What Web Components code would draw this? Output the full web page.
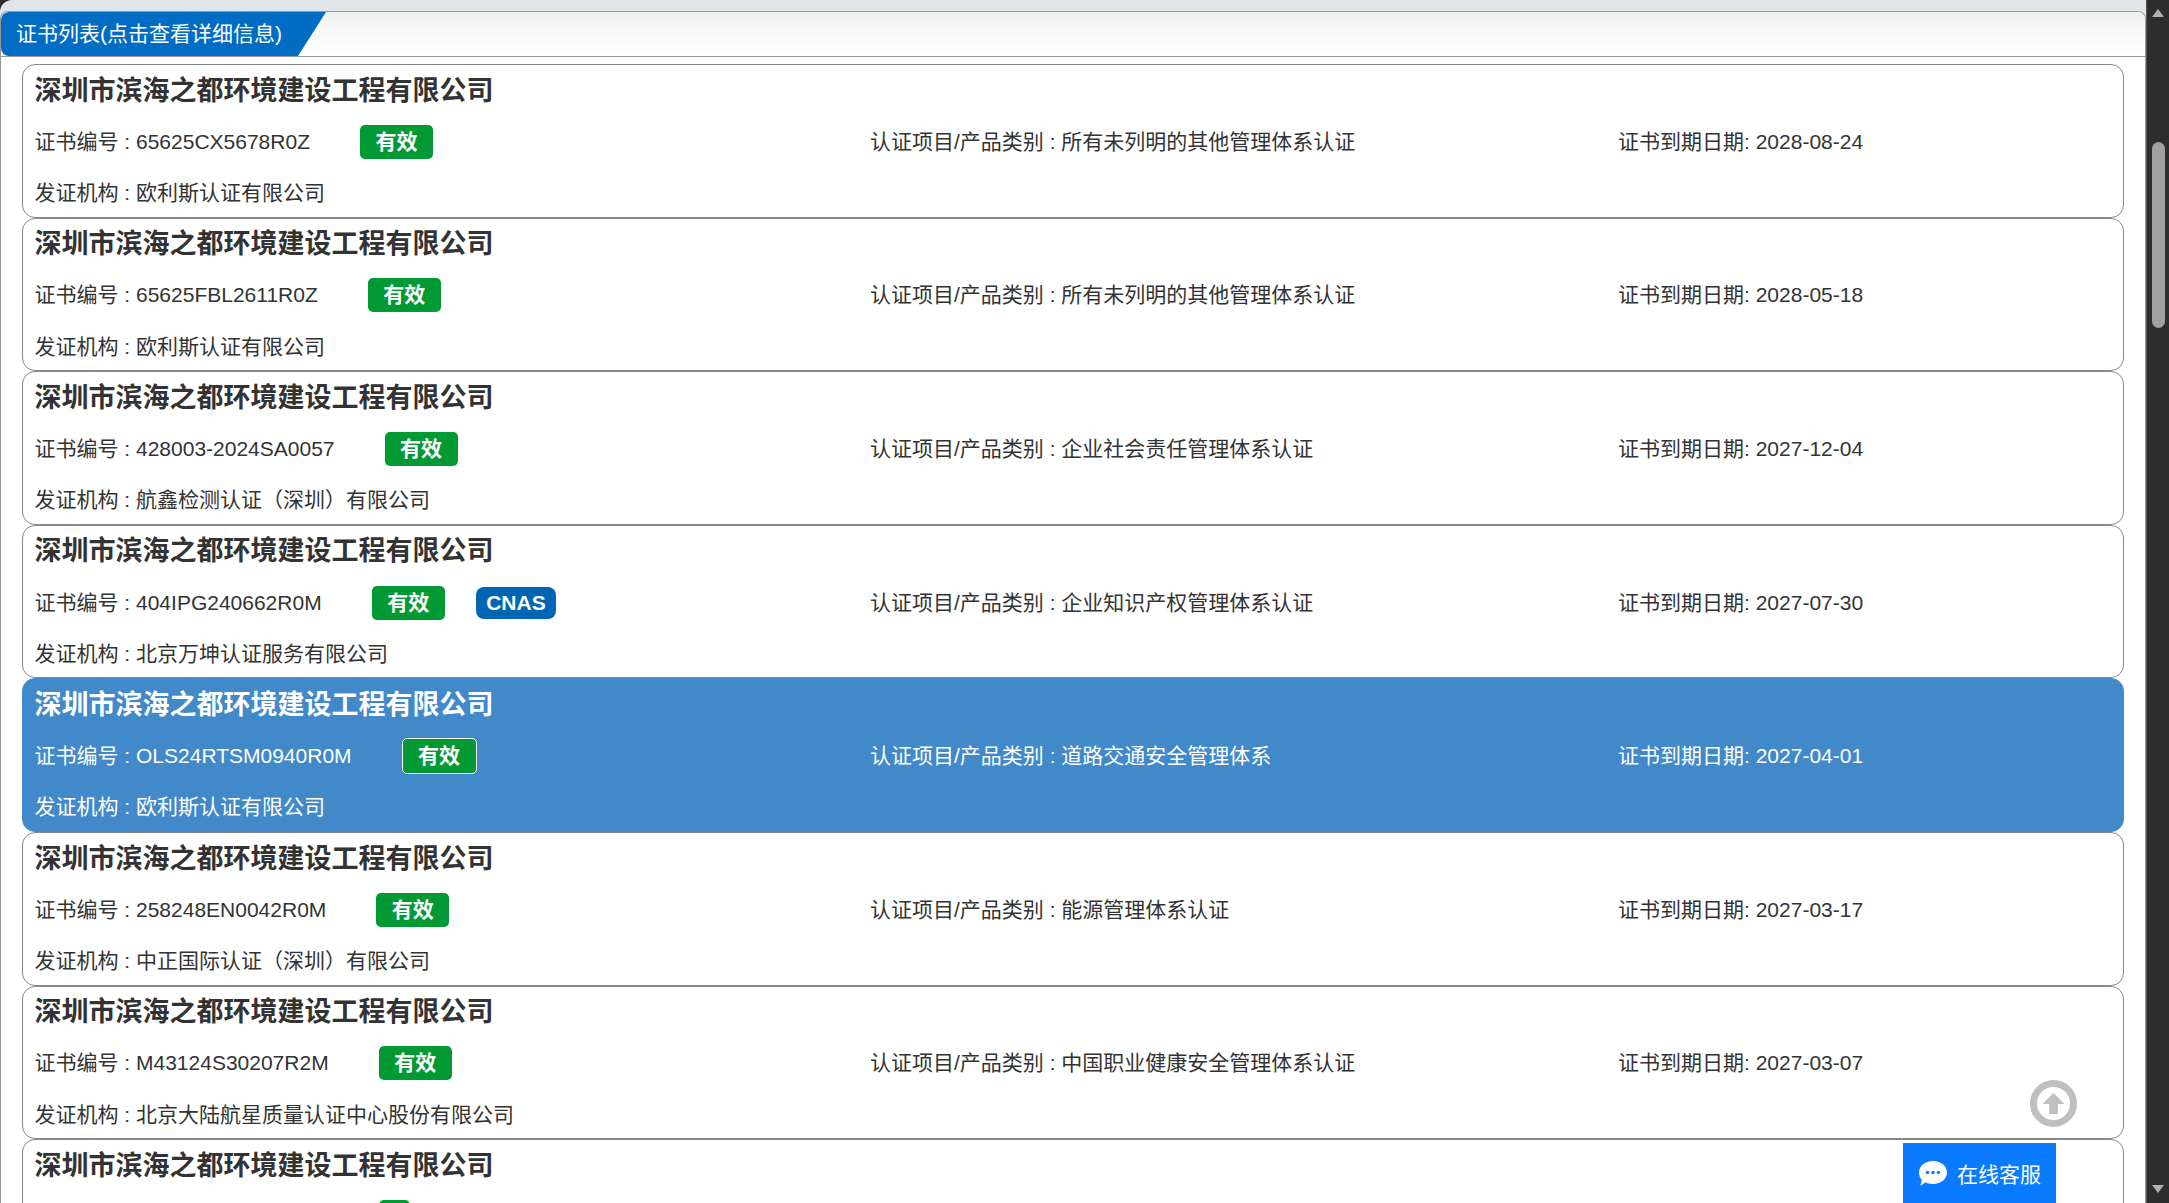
<!DOCTYPE html>
<html lang="zh-CN">
<head>
<meta charset="utf-8">
<title>证书列表</title>
<style>
  html, body { margin: 0; height: 100%; overflow: hidden; background: #2d2d2d; }
  body { font-family: "Liberation Sans", "Noto Sans CJK SC", sans-serif; }
</style>
</head>
<body>
<template id="cert-page-tpl">
  <style>
    :host { display: flex; height: 1203px; position: relative; overflow: hidden; }
    .main { flex: 1; min-width: 0; background: #e2e5e9; border-radius: 12px 0 0 12px; padding-top: 11px; display: flex; }
    .scroll { flex: none; width: 23px; }
  </style>
  <div class="main"><slot></slot></div>
  <div class="scroll"><slot name="scrollbar"></slot></div>
  <slot name="overlay"></slot>
</template>

<template id="cert-panel-tpl">
  <style>
    :host { display: flex; flex-direction: column; flex: 1; min-width: 0; background: #fff; border: 1px solid #999; border-bottom: 0; border-radius: 8px 8px 0 0; overflow: hidden; }
    .head { flex: none; height: 44px; background: linear-gradient(#f1f1f1, #fff); border-bottom: 1px solid #999; }
    .tab { box-sizing: border-box; width: 325px; height: 44px; padding-left: 15px; line-height: 44px; color: #fff; font-size: 21px; background: #006cc4; border-radius: 8px 0 0 8px; clip-path: polygon(0 0, 100% 0, 297px 100%, 0 100%); white-space: nowrap; }
    .list { padding: 7px 21px 0 21px; }
  </style>
  <div class="head"><div class="tab"><slot name="heading"></slot></div></div>
  <div class="list"><slot></slot></div>
</template>

<template id="cert-card-tpl">
  <style>
    :host { display: block; box-sizing: border-box; height: 153.6px; border: 1px solid #888; border-radius: 13px; padding: 0 12px 0 11.5px; color: #333; background: #fff; font-size: 21px; }
    :host([selected]) { background: #4189c9; border-color: #4189c9; color: #fff; }
    .row { display: flex; align-items: center; box-sizing: border-box; height: 51.2px; padding-bottom: 4px; white-space: nowrap; }
    .title { font-size: 27px; font-weight: bold; padding-bottom: 5px; }
    .grid { display: grid; grid-template-columns: 835.5px 748px 1fr; }
    .code { display: flex; align-items: center; }
    .badges { display: flex; align-items: center; gap: 31px; margin-left: 50px; margin-top: 4px; }
    :host([no-code]) .badges { margin-left: 344px; }
  </style>
  <div class="row title"><slot></slot></div>
  <div class="grid">
    <div class="row code"><slot name="code"></slot><span class="badges"><slot name="badge"></slot></span></div>
    <div class="row"><slot name="scope"></slot></div>
    <div class="row"><slot name="expiry"></slot></div>
  </div>
  <div class="row"><slot name="issuer"></slot></div>
</template>

<template id="cert-badge-tpl">
  <style>
    :host { display: inline-block; box-sizing: border-box; height: 34px; line-height: 34px; padding: 0 15.5px; color: #fff; background: #009933; border-radius: 5px; font-size: 21px; font-weight: bold; }
    :host([kind="cnas"]) { height: 32px; line-height: 32px; padding: 0 10.5px; background: #0066b3; border-radius: 8px; }
    :host([outlined]) { height: 36px; line-height: 34px; border: 1px solid #fff; }
  </style>
  <slot></slot>
</template>

<template id="fake-scrollbar-tpl">
  <style>
    :host { display: flex; flex-direction: column; align-items: center; height: 1203px; background: #2d2d2d; border-left: 1px solid #555; box-sizing: border-box; }
    .up { margin-top: 9px; width: 0; height: 0; border: 6px solid transparent; border-top: 0; border-bottom: 8px solid #b0b0b0; }
    .thumb { margin-top: 125px; width: 13px; height: 186px; background: #a0a0a0; border-radius: 7px; }
    .down { margin-top: auto; margin-bottom: 10px; width: 0; height: 0; border: 6px solid transparent; border-bottom: 0; border-top: 8px solid #b0b0b0; }
  </style>
  <div class="up"></div>
  <div class="thumb"></div>
  <div class="down"></div>
</template>

<template id="back-top-tpl">
  <style>
    :host { display: block; position: absolute; left: 2030px; top: 1080px; width: 47px; height: 47px; }
    svg { display: block; }
  </style>
  <svg viewBox="0 0 47 47" width="47" height="47">
    <circle cx="23.5" cy="23.5" r="20" fill="none" stroke="#bfbfbf" stroke-width="7"/>
    <path d="M23.5 13 L34.5 24 H27.8 V34 H19.2 V24 H12.5 Z" fill="#bfbfbf"/>
  </svg>
</template>

<template id="chat-button-tpl">
  <style>
    :host { display: flex; align-items: center; position: absolute; left: 1903px; top: 1143px; box-sizing: border-box; width: 153px; height: 60px; padding-left: 16px; gap: 10px; background: #0a7bff; color: #fff; font-size: 21px; }
    svg { flex: none; display: block; }
  </style>
  <svg viewBox="0 0 28 25" width="28" height="25">
    <path d="M14 0 C22 0 28 5 28 11.5 C28 18 22 23 14 23 C11 23 8 22.3 6 21.3 C4.5 23 3 24 1 24.5 C2.3 22.5 2.8 20.5 2.6 18.7 C1 16.8 0 14.3 0 11.5 C0 5 6 0 14 0 Z" fill="#fff"/>
    <circle cx="8.5" cy="11.5" r="1.7" fill="#0a7bff"/>
    <circle cx="14" cy="11.5" r="1.7" fill="#0a7bff"/>
    <circle cx="19.5" cy="11.5" r="1.7" fill="#0a7bff"/>
  </svg>
  <slot></slot>
</template>

<cert-page>
  <cert-panel>
    <span slot="heading">证书列表(点击查看详细信息)</span>
    <cert-card>深圳市滨海之都环境建设工程有限公司
      <span slot="code">证书编号 : 65625CX5678R0Z</span><cert-badge slot="badge">有效</cert-badge>
      <span slot="scope">认证项目/产品类别 : 所有未列明的其他管理体系认证</span>
      <span slot="expiry">证书到期日期: 2028-08-24</span>
      <span slot="issuer">发证机构 : 欧利斯认证有限公司</span>
    </cert-card>
    <cert-card>深圳市滨海之都环境建设工程有限公司
      <span slot="code">证书编号 : 65625FBL2611R0Z</span><cert-badge slot="badge">有效</cert-badge>
      <span slot="scope">认证项目/产品类别 : 所有未列明的其他管理体系认证</span>
      <span slot="expiry">证书到期日期: 2028-05-18</span>
      <span slot="issuer">发证机构 : 欧利斯认证有限公司</span>
    </cert-card>
    <cert-card>深圳市滨海之都环境建设工程有限公司
      <span slot="code">证书编号 : 428003-2024SA0057</span><cert-badge slot="badge">有效</cert-badge>
      <span slot="scope">认证项目/产品类别 : 企业社会责任管理体系认证</span>
      <span slot="expiry">证书到期日期: 2027-12-04</span>
      <span slot="issuer">发证机构 : 航鑫检测认证（深圳）有限公司</span>
    </cert-card>
    <cert-card>深圳市滨海之都环境建设工程有限公司
      <span slot="code">证书编号 : 404IPG240662R0M</span><cert-badge slot="badge">有效</cert-badge><cert-badge slot="badge" kind="cnas">CNAS</cert-badge>
      <span slot="scope">认证项目/产品类别 : 企业知识产权管理体系认证</span>
      <span slot="expiry">证书到期日期: 2027-07-30</span>
      <span slot="issuer">发证机构 : 北京万坤认证服务有限公司</span>
    </cert-card>
    <cert-card selected>深圳市滨海之都环境建设工程有限公司
      <span slot="code">证书编号 : OLS24RTSM0940R0M</span><cert-badge slot="badge" outlined>有效</cert-badge>
      <span slot="scope">认证项目/产品类别 : 道路交通安全管理体系</span>
      <span slot="expiry">证书到期日期: 2027-04-01</span>
      <span slot="issuer">发证机构 : 欧利斯认证有限公司</span>
    </cert-card>
    <cert-card>深圳市滨海之都环境建设工程有限公司
      <span slot="code">证书编号 : 258248EN0042R0M</span><cert-badge slot="badge">有效</cert-badge>
      <span slot="scope">认证项目/产品类别 : 能源管理体系认证</span>
      <span slot="expiry">证书到期日期: 2027-03-17</span>
      <span slot="issuer">发证机构 : 中正国际认证（深圳）有限公司</span>
    </cert-card>
    <cert-card>深圳市滨海之都环境建设工程有限公司
      <span slot="code">证书编号 : M43124S30207R2M</span><cert-badge slot="badge">有效</cert-badge>
      <span slot="scope">认证项目/产品类别 : 中国职业健康安全管理体系认证</span>
      <span slot="expiry">证书到期日期: 2027-03-07</span>
      <span slot="issuer">发证机构 : 北京大陆航星质量认证中心股份有限公司</span>
    </cert-card>
    <cert-card no-code>深圳市滨海之都环境建设工程有限公司
      <cert-badge slot="badge"></cert-badge>
    </cert-card>
  </cert-panel>
  <fake-scrollbar slot="scrollbar"></fake-scrollbar>
  <back-top slot="overlay"></back-top>
  <chat-button slot="overlay">在线客服</chat-button>
</cert-page>

<script>
function fromTemplate(id) {
    return class extends HTMLElement {
        constructor() {
            super();
            const shadowRoot = this.attachShadow({ mode: "open" });
            shadowRoot.appendChild(document.getElementById(id).content.cloneNode(true));
        }
    };
}
customElements.define("cert-page", fromTemplate("cert-page-tpl"));
customElements.define("cert-panel", fromTemplate("cert-panel-tpl"));
customElements.define("cert-card", fromTemplate("cert-card-tpl"));
customElements.define("cert-badge", fromTemplate("cert-badge-tpl"));
customElements.define("fake-scrollbar", fromTemplate("fake-scrollbar-tpl"));
customElements.define("back-top", fromTemplate("back-top-tpl"));
customElements.define("chat-button", fromTemplate("chat-button-tpl"));
</script>
</body>
</html>
